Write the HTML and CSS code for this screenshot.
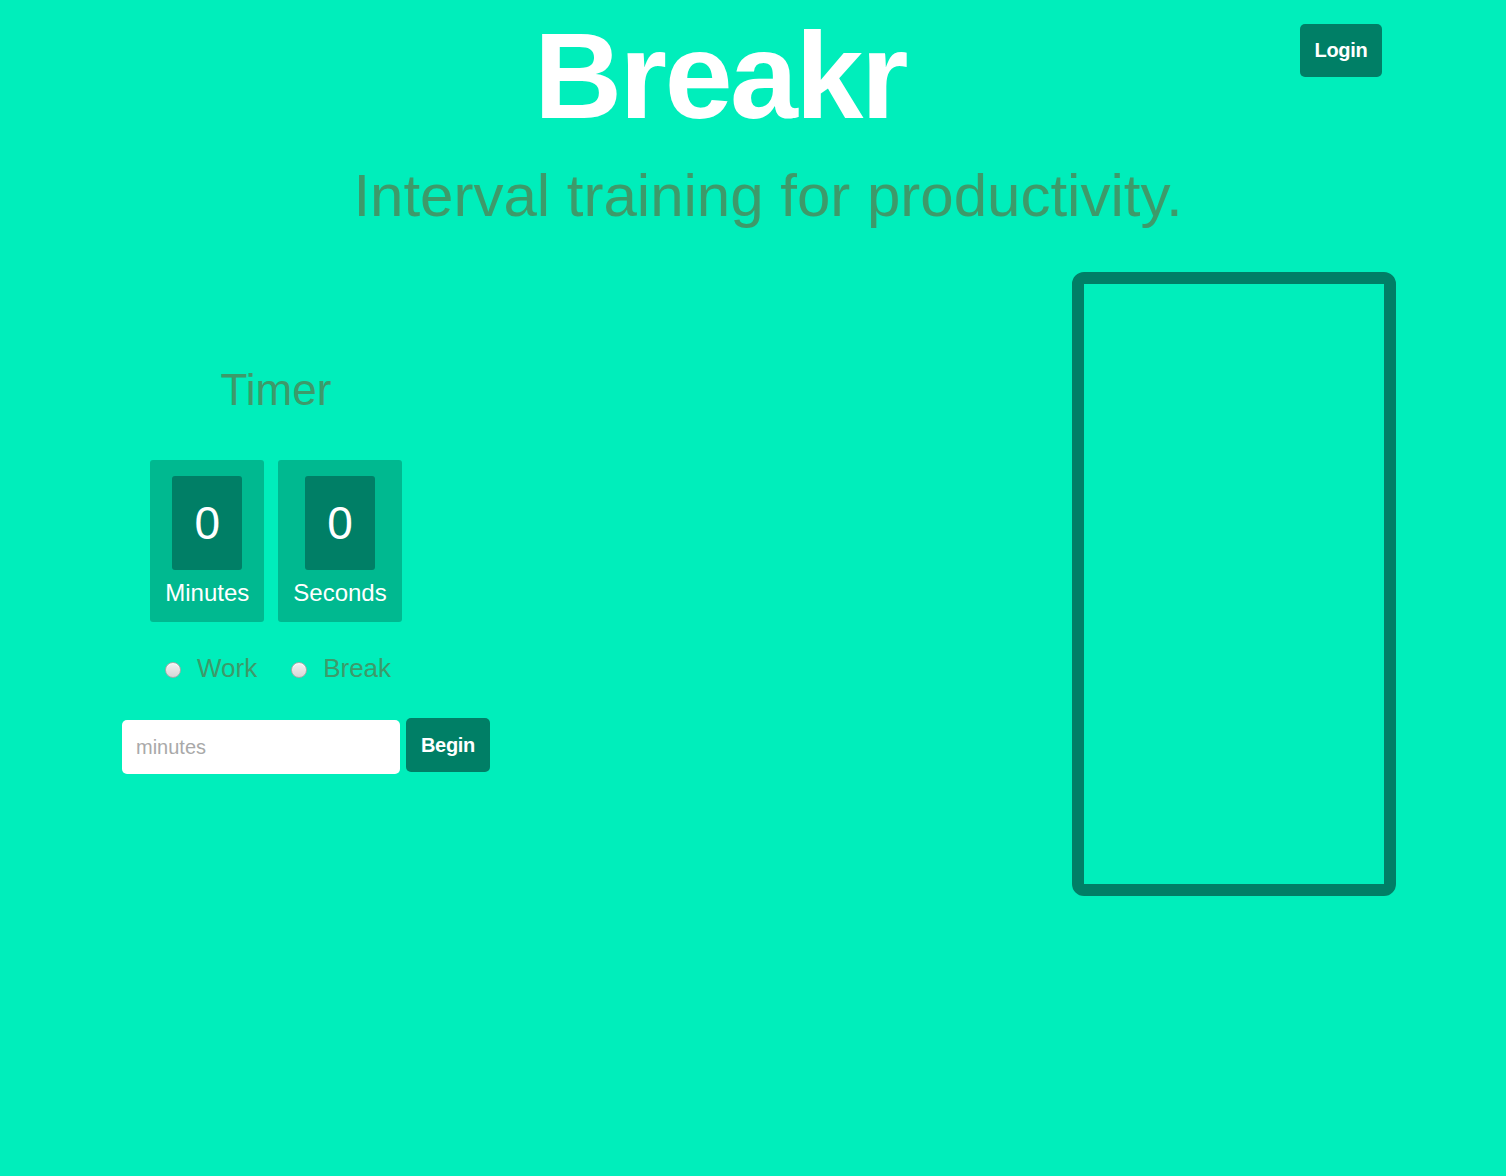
FILE: index.html
```html
<!DOCTYPE html>
<html lang="en">
<head>
<meta charset="utf-8">
<title>Breakr</title>
<link rel="stylesheet" href="styles.css">
</head>
<body>
<header class="header">
  <h1 class="title">Breakr</h1>
  <p class="subtitle">Interval training for productivity.</p>
  <button class="btn login">Login</button>
</header>
<main class="main">
  <section class="timer-col">
    <div class="timer">
      <h2 class="timer-heading">Timer</h2>
      <div class="tiles">
        <div class="tile">
          <div class="digit">0</div>
          <div class="tile-label">Minutes</div>
        </div>
        <div class="tile">
          <div class="digit">0</div>
          <div class="tile-label">Seconds</div>
        </div>
      </div>
      <div class="modes">
        <label class="mode"><input type="radio" name="mode" class="radio"><span>Work</span></label>
        <label class="mode"><input type="radio" name="mode" class="radio"><span>Break</span></label>
      </div>
    </div>
    <div class="start-row">
      <input class="minutes" type="text" placeholder="minutes">
      <button class="btn begin">Begin</button>
    </div>
  </section>
  <section class="panel"></section>
</main>
</body>
</html>
```
FILE: styles.css
```css
html {
  background: #00eebb;
}
body {
  margin: 0;
  min-height: 1176px;
  background: #00eebb;
  font-family: "Liberation Sans", Arial, sans-serif;
  color: #3d9a6a;
}
.header {
  position: relative;
  padding-top: 15px;
}
.title {
  margin: 0;
  padding-right: 66px;
  text-align: center;
  font-size: 122px;
  line-height: 122px;
  font-weight: bold;
  letter-spacing: -2.4px;
  color: #ffffff;
}
.subtitle {
  margin: 23px 0 0;
  padding-left: 30px;
  text-align: center;
  font-size: 60px;
  line-height: 72px;
  font-weight: normal;
  color: #3d9a6a;
}
.btn {
  border: none;
  border-radius: 5px;
  background: #007f66;
  color: #ffffff;
  font-family: "Liberation Sans", Arial, sans-serif;
  font-size: 20px;
  font-weight: bold;
  letter-spacing: -0.3px;
  padding: 0;
  cursor: pointer;
}
.login {
  position: absolute;
  top: 24px;
  right: 124px;
  width: 82px;
  height: 53px;
}
.main {
  display: flex;
  align-items: flex-start;
  margin-top: 40px;
}
.timer-col {
  padding-left: 122px;
  padding-top: 92px;
}
.timer {
  width: 308px;
  display: flex;
  flex-direction: column;
  align-items: center;
}
.timer-heading {
  margin: 0;
  font-size: 44px;
  line-height: 52px;
  font-weight: normal;
  color: #3d9a6a;
}
.tiles {
  display: flex;
  gap: 14px;
  margin-top: 44px;
}
.tile {
  background: #00b990;
  border-radius: 3px;
  padding: 16px 15px 14px;
  display: flex;
  flex-direction: column;
  align-items: center;
}
.digit {
  width: 70px;
  height: 94px;
  background: #007f66;
  border-radius: 3px;
  color: #ffffff;
  font-size: 46px;
  line-height: 94px;
  text-align: center;
}
.tile-label {
  margin-top: 8px;
  font-size: 24px;
  line-height: 30px;
  color: #ffffff;
}
.modes {
  display: flex;
  gap: 34px;
  margin-top: 31px;
  padding-left: 4px;
}
.mode {
  display: flex;
  align-items: center;
  gap: 16px;
  font-size: 26px;
  line-height: 30px;
  color: #3d9a6a;
}
.radio {
  appearance: none;
  -webkit-appearance: none;
  margin: 4px 0 0;
  width: 16px;
  height: 16px;
  border-radius: 50%;
  border: 1px solid #a9a9a9;
  background: linear-gradient(#f2f2f2, #d6d6d6);
  box-shadow: inset 0 1px 1px rgba(255,255,255,0.8);
}
.start-row {
  display: flex;
  align-items: flex-start;
  gap: 6px;
  margin-top: 35px;
}
.minutes {
  margin-top: 2px;
  width: 278px;
  height: 54px;
  box-sizing: border-box;
  border: none;
  border-radius: 5px;
  background: #ffffff;
  padding: 0 14px;
  font-family: "Liberation Sans", Arial, sans-serif;
  font-size: 20px;
  color: #555555;
  outline: none;
}
.minutes::placeholder {
  color: #a9a9a9;
}
.begin {
  width: 84px;
  height: 54px;
}
.panel {
  margin-left: auto;
  margin-right: 110px;
  width: 324px;
  height: 624px;
  box-sizing: border-box;
  border: 12px solid #007f66;
  border-radius: 12px;
}
```
